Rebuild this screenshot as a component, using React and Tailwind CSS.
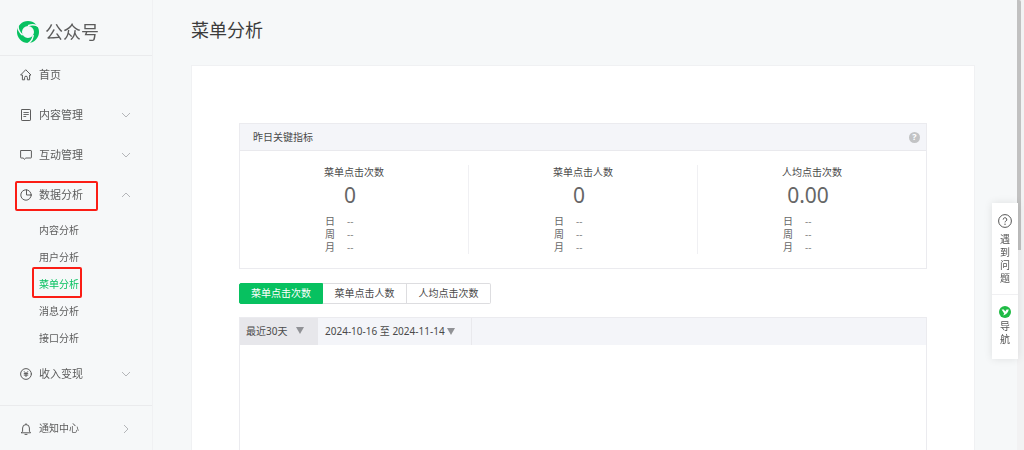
import React from "react";

const MENU = [
  { label: "首页", icon: HomeIcon },
  { label: "内容管理", icon: DocIcon, arrow: "down" },
  { label: "互动管理", icon: ChatIcon, arrow: "down" },
  {
    label: "数据分析",
    icon: PieIcon,
    arrow: "up",
    marked: true,
    children: ["内容分析", "用户分析", "菜单分析", "消息分析", "接口分析"],
  },
  { label: "收入变现", icon: MoneyIcon, arrow: "down" },
];

const STATS = [
  { label: "菜单点击次数", value: "0" },
  { label: "菜单点击人数", value: "0" },
  { label: "人均点击次数", value: "0.00" },
];

const ACTIVE = "菜单分析";

function Icon({ children }) {
  return (
    <svg
      viewBox="0 0 12 12"
      className="size-3 shrink-0"
      fill="none"
      stroke="currentColor"
      strokeWidth="1"
      strokeLinejoin="round"
      strokeLinecap="round"
      aria-hidden="true"
    >
      {children}
    </svg>
  );
}

function HomeIcon() {
  return (
    <Icon>
      <path d="M6 1 L11 6 H9.6 V10.8 H7.4 V8.6 a1.4 1.4 0 0 0 -2.8 0 V10.8 H2.4 V6 H1 Z" />
    </Icon>
  );
}

function DocIcon() {
  return (
    <Icon>
      <rect x="1.5" y="0.5" width="9" height="11" rx="0.6" />
      <path d="M3.8 3.5h4.6M3.8 5.5h4.6M3.8 7.5h2" strokeWidth="0.9" />
    </Icon>
  );
}

function ChatIcon() {
  return (
    <Icon>
      <path d="M1.1 1.5h9.8a.5.5 0 0 1 .5.5v6.5a.5.5 0 0 1-.5.5H5.8L4.4 10.4 3.4 9H1.1a.5.5 0 0 1-.5-.5V2a.5.5 0 0 1 .5-.5z" />
    </Icon>
  );
}

function PieIcon() {
  return (
    <Icon>
      <circle cx="6" cy="6" r="5.2" />
      <path d="M6.5 .8V6h4.7" />
    </Icon>
  );
}

function MoneyIcon() {
  return (
    <Icon>
      <circle cx="6" cy="6" r="5.4" />
      <path d="M4.3 3.6 6 5.6l1.7-2M4.2 5.6h3.6M4.2 7.1h3.6M6 5.6v3" />
    </Icon>
  );
}

function BellIcon() {
  return (
    <Icon>
      <path d="M1.4 9.8h9.2L9.4 8.2V5a3.4 3.4 0 0 0-6.8 0v3.2zM6 1.5V.7M5 11.4h2" />
    </Icon>
  );
}

function Chevron({ dir }) {
  const paths = {
    down: "M1 3l4 4 4-4",
    up: "M1 7l4-4 4 4",
    right: "M3 1l4 4-4 4",
  };
  return (
    <svg viewBox="0 0 10 10" className="size-[10px] text-[#b4b6b9]" fill="none" stroke="currentColor" aria-hidden="true">
      <path d={paths[dir]} />
    </svg>
  );
}

function Triangle() {
  return (
    <svg viewBox="0 0 8 7" className="h-[7px] w-2 text-[#919296]" fill="currentColor" aria-hidden="true">
      <path d="M0 0h8L4 7z" />
    </svg>
  );
}

function Logo() {
  // a green ring, split into three blades by curved cuts
  const cut = "M11 -5Q6.5 -8.6 0 -6.2";
  return (
    <svg viewBox="-11 -11 22 22" className="size-[22px]" fill="none" aria-hidden="true">
      <circle r="8.5" stroke="#07c160" strokeWidth="5" />
      <g stroke="#f6f8f9" strokeWidth="1.5">
        <path d={cut} />
        <path d={cut} transform="rotate(120)" />
        <path d={cut} transform="rotate(240)" />
      </g>
    </svg>
  );
}

// Red frame drawn over a highlighted menu entry
function Mark({ className }) {
  return <span className={`pointer-events-none absolute rounded-xs border-2 border-[#fb1d15] ${className}`} />;
}

function MenuItem({ item }) {
  const ItemIcon = item.icon;
  return (
    <li>
      <a href="#" className="relative flex h-9 items-center gap-[7px] pr-[21px] pl-5 text-[11px]">
        <ItemIcon />
        <span className="flex-1">{item.label}</span>
        {item.arrow && <Chevron dir={item.arrow} />}
        {item.marked && <Mark className="top-1 bottom-0.5 left-[15px] w-[83px]" />}
      </a>
      {item.children && (
        <ul className="mt-1">
          {item.children.map((name) => (
            <li key={name}>
              <a
                href="#"
                className={`relative flex h-[27px] items-center pl-[39px] text-[10px] ${name === ACTIVE ? "text-[#07c160]" : ""}`}
              >
                {name}
                {name === ACTIVE && <Mark className="-top-1 bottom-0 left-8 w-[50px]" />}
              </a>
            </li>
          ))}
        </ul>
      )}
    </li>
  );
}

function Sidebar() {
  return (
    <aside className="sticky top-0 flex h-screen w-[153px] shrink-0 flex-col border-r border-[#f0f1f3] text-[#5c5c5c]">
      <div className="flex h-14 items-center gap-1.5 border-b border-[#eaebed] pt-2 pl-[17px]">
        <Logo />
        <span className="text-lg leading-6">公众号</span>
      </div>
      <nav className="flex-1 pt-px">
        <ul className="flex flex-col gap-1">
          {MENU.map((item) => (
            <MenuItem key={item.label} item={item} />
          ))}
        </ul>
      </nav>
      <a
        href="#"
        className="flex h-[45px] items-center gap-[7px] border-t border-[#eaebed] pt-px pr-[21px] pl-5 text-[10px]"
      >
        <BellIcon />
        <span className="flex-1">通知中心</span>
        <Chevron dir="right" />
      </a>
    </aside>
  );
}

function Stat({ label, value }) {
  return (
    <div className="flex flex-1 justify-center border-r border-[#f0f0f3] text-[10px] last:border-r-0">
      <div>
        <h3 className="leading-[14px]">{label}</h3>
        <p className="pt-1 pr-2 text-center text-[21px] leading-[24px] text-[#666]">{value}</p>
        <dl className="mt-2 pl-px leading-[13px] text-[#666]">
          {["日", "周", "月"].map((unit) => (
            <div key={unit} className="flex gap-3">
              <dt>{unit}</dt>
              <dd className="text-[#8a8a8a]">--</dd>
            </div>
          ))}
        </dl>
      </div>
    </div>
  );
}

function Metrics() {
  return (
    <section className="border border-[#ebebef]">
      <header className="flex h-[27px] items-center justify-between border-b border-[#e9e9ed] bg-[#f4f5f9] pr-[6px] pl-[13px]">
        <h2 className="pb-px text-[10px] leading-[14px]">昨日关键指标</h2>
        <button
          type="button"
          aria-label="说明"
          className="flex size-[11px] items-center justify-center rounded-full bg-[#c2c3c5] text-[9px] font-bold text-white"
        >
          ?
        </button>
      </header>
      <div className="flex py-[14px]">
        {STATS.map((stat) => (
          <Stat key={stat.label} {...stat} />
        ))}
      </div>
    </section>
  );
}

function Tabs() {
  return (
    <div role="tablist" className="mt-[14px] flex text-[10px]">
      {STATS.map(({ label }, i) => (
        <button
          key={label}
          type="button"
          role="tab"
          aria-selected={i === 0}
          className={`h-[21px] w-[84px] border first:rounded-l-xs last:rounded-r-xs not-first:border-l-0 ${
            i === 0 ? "border-[#07c160] bg-[#07c160] text-white" : "border-[#dddde0] bg-white"
          }`}
        >
          {label}
        </button>
      ))}
    </div>
  );
}

function Chart() {
  return (
    <section className="mt-[13px] min-h-[240px] border border-[#ebebef]">
      <div className="flex h-[27px] bg-[#f4f5f9] text-[10px]">
        <div className="relative w-[78px] bg-[#e7e7eb]">
          <select aria-label="时间范围" className="h-full w-full appearance-none pl-1.5 outline-none">
            <option>最近30天</option>
          </select>
          <span className="pointer-events-none absolute top-[9px] right-[14px]">
            <Triangle />
          </span>
        </div>
        <button type="button" className="flex w-[154px] items-center gap-0.5 border-r border-[#e9e9ed] pl-[7px]">
          2024-10-16 至 2024-11-14
          <Triangle />
        </button>
      </div>
    </section>
  );
}

function HelpBar() {
  return (
    <div className="fixed top-[203px] right-[6px] w-[26px] bg-white text-[10px] leading-[13px] text-[#555] shadow-[0_0_8px_rgba(0,0,0,0.1)]">
      <a href="#" className="flex h-[92px] flex-col items-center border-b border-[#f0f0f2] pt-[11px]">
        <svg viewBox="0 0 14 14" className="mb-[5px] size-[14px] shrink-0" fill="none" stroke="currentColor" aria-hidden="true">
          <circle cx="7" cy="7" r="6.4" />
          <path d="M5.2 5.6a1.8 1.8 0 1 1 2.7 1.5c-.6.4-.9.6-.9 1.3" />
          <circle cx="7" cy="10.2" r="0.7" fill="currentColor" stroke="none" />
        </svg>
        <span className="w-[10px] break-all">遇到问题</span>
      </a>
      <a href="#" className="flex h-16 flex-col items-center pt-[11px]">
        <svg viewBox="0 0 12 12" className="mb-0.5 size-3 shrink-0" aria-hidden="true">
          <circle cx="6" cy="6" r="6" fill="#1fbb45" />
          <path d="M2.6 3.6h2.2l1.5 2L7.6 3.6H9.8C9.2 6.600 7.400 8.900 4.200 9.400L5.200 7.400z" fill="#fff" />
        </svg>
        <span className="w-[10px] break-all">导航</span>
      </a>
    </div>
  );
}

export default function App() {
  return (
    <div className="flex h-screen overflow-hidden bg-[#f6f8f9] font-['Noto_Sans','Noto_Sans_CJK_SC',sans-serif] text-[#4a4a4a]">
      <Sidebar />
      <main className="min-w-0 flex-1 pr-[42px] pl-[38px]">
        <h1 className="pt-[18px] text-lg leading-6 text-[#3c3c3c]">菜单分析</h1>
        <div className="mt-[23px] border border-[#f0f1f3] bg-white px-[47px] pt-[57px] pb-10">
          <Metrics />
          <Tabs />
          <Chart />
        </div>
      </main>
      <HelpBar />
      <div className="w-[7px] shrink-0 bg-[#f2f2f3]">
        <div className="h-[250px] w-1 rounded-tr-xs bg-[#c1c1c1]" />
      </div>
    </div>
  );
}
